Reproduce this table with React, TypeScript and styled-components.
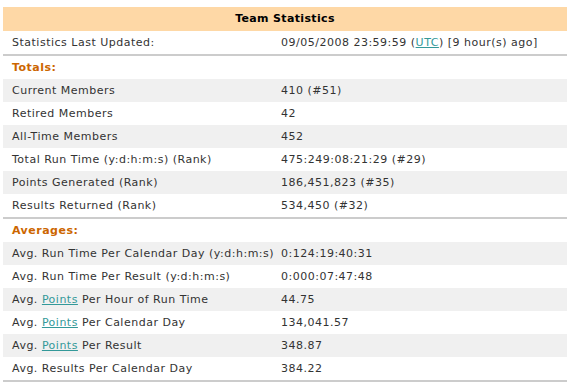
import styled, { createGlobalStyle } from "styled-components";

const GlobalStyle = createGlobalStyle`
  body {
    margin: 0;
    background: #ffffff;
    font-family: "DejaVu Sans", Verdana, sans-serif;
    font-size: 11px;
    letter-spacing: 0.5px;
    color: #333333;
  }
`;

const Page = styled.div`
  padding: 7px 0 0 3px;
`;

const StatsTable = styled.section`
  width: 564px;
  display: flex;
  flex-direction: column;
`;

const Title = styled.h2`
  margin: 0;
  height: 24px;
  line-height: 24px;
  background: #fed8a6;
  text-align: center;
  font-size: 11px;
  font-weight: 700;
  letter-spacing: 0.35px;
  color: #000000;
`;

const Row = styled.div<{ $shaded?: boolean; $divider?: boolean }>`
  display: grid;
  grid-template-columns: 278px 1fr;
  height: 23px;
  align-items: center;
  background: ${(p) => (p.$shaded ? "#f0f0f0" : "#ffffff")};
  border-bottom: ${(p) => (p.$divider ? "2px solid #cccccc" : "none")};
`;

const Label = styled.div`
  padding-left: 9px;
  white-space: nowrap;
`;

const Value = styled.div`
  white-space: nowrap;
`;

const Section = styled.div`
  height: 23px;
  line-height: 23px;
  padding-left: 9px;
  font-weight: 700;
  color: #cc6600;
`;

const Link = styled.a`
  color: #339999;
  text-decoration: underline;
`;

interface Stat {
  label: React.ReactNode;
  value: string;
}

const PointsLink = () => <Link href="#">Points</Link>;

const totals: Stat[] = [
  { label: "Current Members", value: "410 (#51)" },
  { label: "Retired Members", value: "42" },
  { label: "All-Time Members", value: "452" },
  { label: "Total Run Time (y:d:h:m:s) (Rank)", value: "475:249:08:21:29 (#29)" },
  { label: "Points Generated (Rank)", value: "186,451,823 (#35)" },
  { label: "Results Returned (Rank)", value: "534,450 (#32)" },
];

const averages: Stat[] = [
  { label: "Avg. Run Time Per Calendar Day (y:d:h:m:s)", value: "0:124:19:40:31" },
  { label: "Avg. Run Time Per Result (y:d:h:m:s)", value: "0:000:07:47:48" },
  { label: <>Avg. <PointsLink /> Per Hour of Run Time</>, value: "44.75" },
  { label: <>Avg. <PointsLink /> Per Calendar Day</>, value: "134,041.57" },
  { label: <>Avg. <PointsLink /> Per Result</>, value: "348.87" },
  { label: "Avg. Results Per Calendar Day", value: "384.22" },
];

function StatRows({ rows }: { rows: Stat[] }) {
  return (
    <>
      {rows.map((r, i) => (
        <Row key={i} $shaded={i % 2 === 0} $divider={i === rows.length - 1}>
          <Label>{r.label}</Label>
          <Value>{r.value}</Value>
        </Row>
      ))}
    </>
  );
}

export default function App() {
  return (
    <Page>
      <GlobalStyle />
      <StatsTable>
        <Title>Team Statistics</Title>
        <Row $divider>
          <Label>Statistics Last Updated:</Label>
          <Value>
            09/05/2008 23:59:59 (<Link href="#">UTC</Link>) [9 hour(s) ago]
          </Value>
        </Row>
        <Section>Totals:</Section>
        <StatRows rows={totals} />
        <Section>Averages:</Section>
        <StatRows rows={averages} />
      </StatsTable>
    </Page>
  );
}
